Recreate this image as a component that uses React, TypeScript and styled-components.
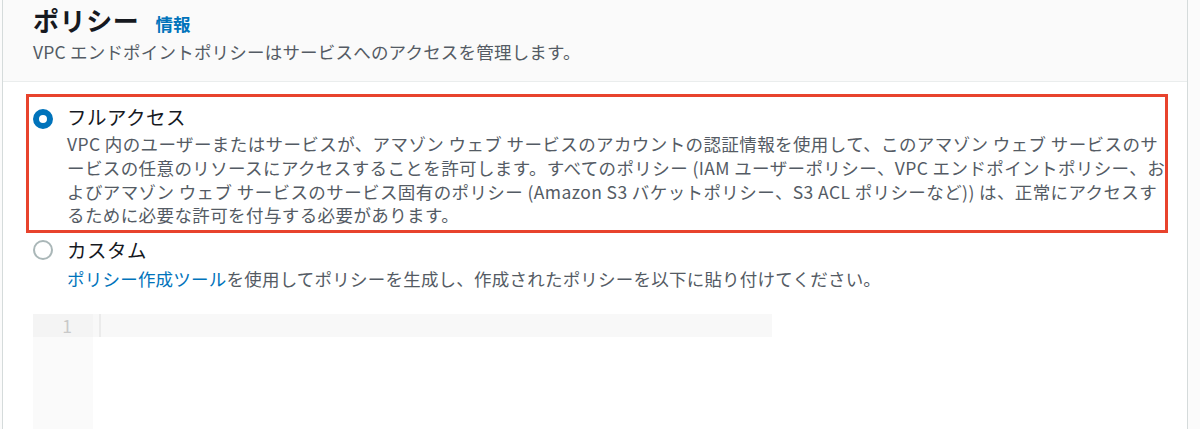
import React from "react";
import styled, { createGlobalStyle } from "styled-components";

const Global = createGlobalStyle`
  html, body { margin: 0; padding: 0; background: #fbfbfb; }
  body {
    font-family: "Noto Sans CJK JP", "Noto Sans", sans-serif;
    -webkit-font-smoothing: antialiased;
  }
`;

const Panel = styled.section`
  margin-left: 2px;
  width: 1186px;
  height: 429px;
  box-sizing: border-box;
  border-left: 1px solid #d5dbdb;
  border-right: 1px solid #d5dbdb;
  background: #ffffff;
  overflow: hidden;
`;

const Header = styled.header`
  height: 82px;
  box-sizing: border-box;
  padding: 4px 30px 0;
  background: #fafafa;
  border-bottom: 1px solid #eaeded;
`;

const TitleRow = styled.div`
  display: flex;
  align-items: baseline;
  gap: 16px;
`;

const Title = styled.h2`
  margin: 0;
  font-size: 26px;
  line-height: 32px;
  font-weight: 700;
  letter-spacing: 0.6px;
  color: #16191f;
`;

const InfoLink = styled.a`
  font-size: 17.5px;
  font-weight: 700;
  color: #0073bb;
  text-decoration: none;
`;

const Subtitle = styled.p`
  margin: 4px 0 0;
  font-size: 17.5px;
  line-height: 24px;
  letter-spacing: 0.2px;
  color: #545b64;
`;

const Body = styled.div`
  padding: 12px 0 0 23px;
`;

const Option = styled.div<{ $highlighted?: boolean }>`
  width: 1142px;
  box-sizing: border-box;
  display: grid;
  grid-template-columns: 20px 1fr;
  column-gap: 14px;
  border: 3px solid ${(p) => (p.$highlighted ? "#e8432d" : "transparent")};
  padding: ${(p) => (p.$highlighted ? "7px 0 3px 4px" : "1px 0 0 4px")};
`;

const Radio = styled.span<{ $checked?: boolean }>`
  grid-row: 1;
  grid-column: 1;
  width: 20px;
  height: 20px;
  margin-top: ${(p) => (p.$checked ? "5px" : "3px")};
  box-sizing: border-box;
  border-radius: 50%;
  background: #ffffff;
  border: ${(p) => (p.$checked ? "6px solid #0073bb" : "2px solid #aab7b8")};
`;

const Label = styled.div`
  grid-row: 1;
  grid-column: 2;
  font-size: 19.5px;
  line-height: 26px;
  letter-spacing: 0.5px;
  color: #16191f;
`;

const Description = styled.div`
  grid-column: 2;
  margin-top: 2px;
  font-size: 17.5px;
  line-height: 23.75px;
  color: #545b64;
  letter-spacing: 0.4px;
  white-space: nowrap;
`;

const HelpLine = styled.div`
  grid-column: 2;
  margin-top: 4px;
  font-size: 17.5px;
  line-height: 24px;
  letter-spacing: 0.22px;
  color: #545b64;
`;

const Link = styled.a`
  color: #0073bb;
  text-decoration: none;
`;

const Editor = styled.div`
  margin: 20px 0 0 7px;
  width: 739px;
  height: 130px;
  display: grid;
  grid-template-columns: 60px 1fr;
  grid-template-rows: 23px 1fr;
  background: #ffffff;
`;

const GutterCell = styled.div<{ $active?: boolean }>`
  background: ${(p) => (p.$active ? "#f4f4f4" : "#fafafa")};
  box-sizing: border-box;
  padding-right: 21px;
  text-align: right;
  font-size: 17.5px;
  line-height: 23px;
  color: #c9c9c9;
`;

const CodeLine = styled.div<{ $active?: boolean }>`
  background: ${(p) => (p.$active ? "#f8f8f8" : "#ffffff")};
  padding-left: 6px;
  display: flex;
  align-items: stretch;
`;

const Cursor = styled.span`
  width: 2px;
  background: #ebebeb;
`;

export default function App() {
  return (
    <>
      <Global />
      <Panel>
        <Header>
          <TitleRow>
            <Title>ポリシー</Title>
            <InfoLink href="#">情報</InfoLink>
          </TitleRow>
          <Subtitle>VPC エンドポイントポリシーはサービスへのアクセスを管理します。</Subtitle>
        </Header>
        <Body>
          <Option $highlighted>
            <Radio $checked />
            <Label>フルアクセス</Label>
            <Description>
              VPC 内のユーザーまたはサービスが、アマゾン ウェブ サービスのアカウントの認証情報を使用して、このアマゾン ウェブ サービスのサ
              <br />
              ービスの任意のリソースにアクセスすることを許可します。すべてのポリシー (IAM ユーザーポリシー、VPC エンドポイントポリシー、お
              <br />
              よびアマゾン ウェブ サービスのサービス固有のポリシー (Amazon S3 バケットポリシー、S3 ACL ポリシーなど)) は、正常にアクセスす
              <br />
              るために必要な許可を付与する必要があります。
            </Description>
          </Option>
          <Option>
            <Radio />
            <Label>カスタム</Label>
            <HelpLine>
              <Link href="#">ポリシー作成ツール</Link>を使用してポリシーを生成し、作成されたポリシーを以下に貼り付けてください。
            </HelpLine>
          </Option>
          <Editor>
            <GutterCell $active>1</GutterCell>
            <CodeLine $active>
              <Cursor />
            </CodeLine>
            <GutterCell />
            <CodeLine />
          </Editor>
        </Body>
      </Panel>
    </>
  );
}
